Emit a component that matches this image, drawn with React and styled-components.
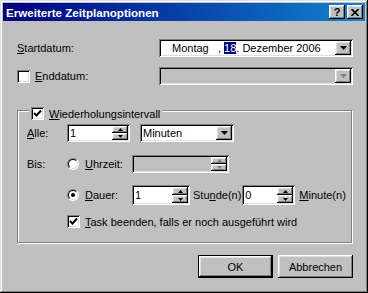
import React from 'react'
import styled, { createGlobalStyle, css } from 'styled-components'

const GlobalStyle = createGlobalStyle`
  html, body {
    margin: 0;
    padding: 0;
    background: #c0c0c0;
  }
  body {
    font-family: "Liberation Sans", Arial, sans-serif;
    font-size: 11px;
    color: #000;
  }
`

const raised = css`
  background: #c0c0c0;
  box-shadow: inset -1px -1px #000, inset 1px 1px #fff, inset -2px -2px #808080,
    inset 2px 2px #dfdfdf;
`

const sunken = css`
  box-shadow: inset 1px 1px #808080, inset -1px -1px #fff, inset 2px 2px #000,
    inset -2px -2px #dfdfdf;
`

const Window = styled.div`
  width: 368px;
  height: 293px;
  box-sizing: border-box;
  padding: 3px;
  background: #c0c0c0;
  box-shadow: inset -1px -1px #000, inset 1px 1px #dfdfdf, inset -2px -2px #808080,
    inset 2px 2px #fff;
  display: flex;
  flex-direction: column;
`

const TitleBar = styled.div`
  height: 18px;
  display: flex;
  align-items: center;
  padding: 0 2px 0 3px;
  background: linear-gradient(to right, #000080, #1084d0);
  color: #fff;
  font-weight: bold;
  font-size: 11.6px;
`

const TitleText = styled.span`
  flex: 1;
`

const TitleButton = styled.div`
  ${raised};
  width: 16px;
  height: 14px;
  margin-left: ${p => p.$gap || 0}px;
  display: flex;
  align-items: center;
  justify-content: center;
  color: #000;
  font-size: 11px;
  font-weight: bold;
  line-height: 14px;
  box-sizing: border-box;
`

const Body = styled.div`
  display: flex;
  flex-direction: column;
  padding: 18px 12px 0 14px;
`

const Row = styled.div`
  display: flex;
  align-items: center;
  justify-content: space-between;
  height: 18px;
  margin-top: ${p => p.$top || 0}px;
`

const CheckLabel = styled.label`
  display: inline-flex;
  align-items: center;
  gap: 5px;
`

const CheckBox = styled.span`
  width: 13px;
  height: 13px;
  box-sizing: border-box;
  background: #fff;
  ${sunken};
  display: inline-flex;
  align-items: center;
  justify-content: center;
  flex: none;
`

const Radio = styled.span`
  width: 12px;
  height: 12px;
  box-sizing: border-box;
  border-radius: 50%;
  border: 1px solid;
  border-color: #808080 #fff #fff #808080;
  background: #dfdfdf;
  display: inline-flex;
  align-items: center;
  justify-content: center;
  flex: none;
`

const RadioInner = styled.span`
  width: 10px;
  height: 10px;
  box-sizing: border-box;
  border-radius: 50%;
  border: 1px solid;
  border-color: #000 #dfdfdf #dfdfdf #000;
  background: #fff;
  display: flex;
  align-items: center;
  justify-content: center;
`

const Dot = styled.span`
  width: 4px;
  height: 4px;
  border-radius: 50%;
  background: #000;
`

const Field = styled.div`
  ${sunken};
  width: ${p => p.$w}px;
  height: ${p => p.$h || 18}px;
  box-sizing: border-box;
  padding: 2px;
  background: ${p => (p.$disabled ? '#c0c0c0' : '#fff')};
  display: flex;
  align-items: stretch;
  flex: none;
  margin-left: ${p => p.$ml || 0}px;
`

const FieldText = styled.span`
  flex: 1;
  display: flex;
  align-items: center;
  padding-left: ${p => p.$pl || 1}px;
  white-space: pre;
`

const DateField = styled.span`
  min-width: ${p => p.$w}px;
`

const Highlight = styled.span`
  background: #000080;
  color: #fff;
  margin-left: 3px;
`

const DropButton = styled.span`
  ${raised};
  width: 16px;
  display: flex;
  align-items: center;
  justify-content: center;
  flex: none;
`

const Spinner = styled.span`
  width: 16px;
  display: flex;
  flex-direction: column;
  flex: none;
`

const SpinHalf = styled.span`
  ${raised};
  flex: 1;
  display: flex;
  align-items: center;
  justify-content: center;
`

const Group = styled.div`
  position: relative;
  margin-top: 25px;
  margin-right: 1px;
  height: 133px;
  box-sizing: border-box;
  border: 1px solid #808080;
  box-shadow: inset 1px 1px #fff, 1px 1px #fff;
  padding: 13px 0 0 9px;
  display: flex;
  flex-direction: column;
`

const Legend = styled.div`
  position: absolute;
  top: -4px;
  left: 11px;
  padding: 0 3px 0 2px;
  background: #c0c0c0;
  display: flex;
  align-items: center;
  height: 13px;
`

const GroupRow = styled.div`
  display: flex;
  align-items: center;
  height: ${p => p.$h || 18}px;
  margin-top: ${p => p.$top || 0}px;
`

const RowLabel = styled.span`
  width: 40px;
  flex: none;
`

const OptionLabel = styled.span`
  display: inline-flex;
  align-items: center;
  gap: 6px;
  width: 65px;
  flex: none;
`

const Unit = styled.span`
  margin-left: ${p => p.$ml || 3}px;
`

const ButtonRow = styled.div`
  display: flex;
  justify-content: flex-end;
  gap: 5px;
  margin-top: 12px;
`

const PushButton = styled.button`
  ${raised};
  width: 75px;
  height: 23px;
  border: none;
  padding: 0;
  font-family: inherit;
  font-size: 11px;
  color: #000;
  ${p =>
    p.$default &&
    css`
      box-shadow: inset 0 0 0 1px #000, inset -2px -2px #000, inset 2px 2px #fff,
        inset -3px -3px #808080, inset 3px 3px #dfdfdf;
    `}
`

const Arrow = ({ dir = 'down', color = '#000', size = 7 }) => {
  const h = Math.ceil(size / 2)
  const pts = dir === 'down' ? `0,0 ${size},0 ${size / 2},${h}` : `0,${h} ${size},${h} ${size / 2},0`
  return (
    <svg width={size} height={h} viewBox={`0 0 ${size} ${h}`}>
      <polygon points={pts} fill={color} />
    </svg>
  )
}

const Check = () => (
  <svg width="9" height="9" viewBox="0 0 9 9">
    <path d="M1 4 L3.5 6.5 L8 1.5" stroke="#000" strokeWidth="2" fill="none" />
  </svg>
)

const Spin = ({ disabled }) => {
  const c = disabled ? '#808080' : '#000'
  return (
    <Spinner>
      <SpinHalf>
        <Arrow dir="up" color={c} size={5} />
      </SpinHalf>
      <SpinHalf>
        <Arrow dir="down" color={c} size={5} />
      </SpinHalf>
    </Spinner>
  )
}

export default function App() {
  return (
    <>
      <GlobalStyle />
      <Window>
        <TitleBar>
          <TitleText>Erweiterte Zeitplanoptionen</TitleText>
          <TitleButton>?</TitleButton>
          <TitleButton $gap={2}>
            <svg width="8" height="7" viewBox="0 0 8 7">
              <path d="M0.5 0 L7.5 7 M7.5 0 L0.5 7" stroke="#000" strokeWidth="1.6" />
            </svg>
          </TitleButton>
        </TitleBar>
        <Body>
          <Row>
            <span>
              <u>S</u>tartdatum:
            </span>
            <Field $w={194}>
              <FieldText $pl={11}>
                <DateField $w={46}>Montag</DateField>,<Highlight>18</Highlight>. Dezember 2006
              </FieldText>
              <DropButton>
                <Arrow />
              </DropButton>
            </Field>
          </Row>
          <Row $top={10}>
            <CheckLabel>
              <CheckBox />
              <span>
                <u>E</u>nddatum:
              </span>
            </CheckLabel>
            <Field $w={194} $disabled>
              <FieldText />
              <DropButton>
                <Arrow color="#808080" />
              </DropButton>
            </Field>
          </Row>
          <Group>
            <Legend>
              <CheckLabel>
                <CheckBox>
                  <Check />
                </CheckBox>
                <span>
                  <u>W</u>iederholungsintervall
                </span>
              </CheckLabel>
            </Legend>
            <GroupRow>
              <RowLabel>
                <u>A</u>lle:
              </RowLabel>
              <Field $w={63}>
                <FieldText>1</FieldText>
                <Spin />
              </Field>
              <Field $w={94} $ml={10}>
                <FieldText>Minuten</FieldText>
                <DropButton>
                  <Arrow />
                </DropButton>
              </Field>
            </GroupRow>
            <GroupRow $top={13}>
              <RowLabel>Bis:</RowLabel>
              <OptionLabel>
                <Radio>
                  <RadioInner />
                </Radio>
                <span>
                  <u>U</u>hrzeit:
                </span>
              </OptionLabel>
              <Field $w={97} $disabled>
                <FieldText />
                <Spin disabled />
              </Field>
            </GroupRow>
            <GroupRow $top={12} $h={20}>
              <RowLabel />
              <OptionLabel>
                <Radio>
                  <RadioInner>
                    <Dot />
                  </RadioInner>
                </Radio>
                <span>
                  <u>D</u>auer:
                </span>
              </OptionLabel>
              <Field $w={58} $h={20}>
                <FieldText>1</FieldText>
                <Spin />
              </Field>
              <Unit>
                Stu<u>n</u>de(n)
              </Unit>
              <Field $w={53} $h={20} $ml={1}>
                <FieldText>0</FieldText>
                <Spin />
              </Field>
              <Unit $ml={4}>
                <u>M</u>inute(n)
              </Unit>
            </GroupRow>
            <GroupRow $top={10} $h={13}>
              <RowLabel />
              <CheckLabel>
                <CheckBox>
                  <Check />
                </CheckBox>
                <span>
                  <u>T</u>ask beenden, falls er noch ausgeführt wird
                </span>
              </CheckLabel>
            </GroupRow>
          </Group>
          <ButtonRow>
            <PushButton $default>OK</PushButton>
            <PushButton>Abbrechen</PushButton>
          </ButtonRow>
        </Body>
      </Window>
    </>
  )
}
